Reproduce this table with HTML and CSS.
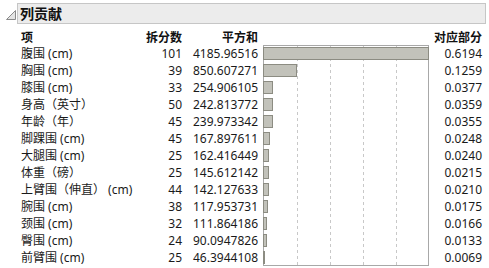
FILE: index.html
```html
<!DOCTYPE html>
<html lang="zh">
<head>
<meta charset="utf-8">
<link rel="stylesheet" href="styles.css">
</head>
<body>
<div class="panel">
  <div class="head">
    <span class="tri"><svg width="10" height="10" viewBox="0 0 10 10"><polygon points="0.5,9.5 9.5,9.5 9.5,0.5" fill="#e4e4e4" stroke="#8a8a8a" stroke-width="1"/></svg></span>
    <div class="title">列贡献</div>
  </div>
  <div class="tbl">
    <div class="th l">项</div>
    <div class="th r">拆分数</div>
    <div class="th r">平方和</div>
    <div class="th"></div>
    <div class="th r">对应部分</div>

    <div class="chart">
      <div class="brow"><div class="bar" style="width:166px"></div></div>
      <div class="brow"><div class="bar" style="width:33.7px"></div></div>
      <div class="brow"><div class="bar" style="width:10.1px"></div></div>
      <div class="brow"><div class="bar" style="width:9.6px"></div></div>
      <div class="brow"><div class="bar" style="width:9.5px"></div></div>
      <div class="brow"><div class="bar" style="width:6.6px"></div></div>
      <div class="brow"><div class="bar" style="width:6.4px"></div></div>
      <div class="brow"><div class="bar" style="width:5.8px"></div></div>
      <div class="brow"><div class="bar" style="width:5.6px"></div></div>
      <div class="brow"><div class="bar" style="width:4.7px"></div></div>
      <div class="brow"><div class="bar" style="width:4.4px"></div></div>
      <div class="brow"><div class="bar" style="width:3.6px"></div></div>
      <div class="brow"><div class="bar" style="width:1.8px"></div></div>
    </div>

    <div class="td l">腹围 (cm)</div><div class="td r">101</div><div class="td r">4185.96516</div><div class="td r c5">0.6194</div>
    <div class="td l">胸围 (cm)</div><div class="td r">39</div><div class="td r">850.607271</div><div class="td r c5">0.1259</div>
    <div class="td l">膝围 (cm)</div><div class="td r">33</div><div class="td r">254.906105</div><div class="td r c5">0.0377</div>
    <div class="td l">身高（英寸）</div><div class="td r">50</div><div class="td r">242.813772</div><div class="td r c5">0.0359</div>
    <div class="td l">年龄（年）</div><div class="td r">45</div><div class="td r">239.973342</div><div class="td r c5">0.0355</div>
    <div class="td l">脚踝围 (cm)</div><div class="td r">45</div><div class="td r">167.897611</div><div class="td r c5">0.0248</div>
    <div class="td l">大腿围 (cm)</div><div class="td r">25</div><div class="td r">162.416449</div><div class="td r c5">0.0240</div>
    <div class="td l">体重（磅）</div><div class="td r">25</div><div class="td r">145.612142</div><div class="td r c5">0.0215</div>
    <div class="td l">上臂围（伸直） (cm)</div><div class="td r">44</div><div class="td r">142.127633</div><div class="td r c5">0.0210</div>
    <div class="td l">腕围 (cm)</div><div class="td r">38</div><div class="td r">117.953731</div><div class="td r c5">0.0175</div>
    <div class="td l">颈围 (cm)</div><div class="td r">32</div><div class="td r">111.864186</div><div class="td r c5">0.0166</div>
    <div class="td l">臀围 (cm)</div><div class="td r">24</div><div class="td r">90.0947826</div><div class="td r c5">0.0133</div>
    <div class="td l">前臂围 (cm)</div><div class="td r">25</div><div class="td r">46.3944108</div><div class="td r c5">0.0069</div>
  </div>
</div>
</body>
</html>
```

FILE: styles.css
```css
html, body {
  margin: 0;
  padding: 0;
  background: #ffffff;
}
body {
  font-family: "Noto Sans", "Noto Sans CJK SC", sans-serif;
  font-size: 12px;
  color: #1a1a1a;
  width: 489px;
  height: 268px;
  overflow: hidden;
}
.panel {
  padding-top: 3px;
}
.head {
  display: flex;
  align-items: flex-start;
}
.tri {
  width: 17px;
  height: 21px;
  display: flex;
  align-items: flex-start;
  justify-content: flex-start;
  padding-left: 6px;
  padding-top: 7px;
  box-sizing: border-box;
}
.tri svg {
  display: block;
}
.title {
  width: 469px;
  height: 21px;
  box-sizing: border-box;
  border: 1px solid #c6c6c6;
  background: #ececec;
  font-family: "Noto Sans CJK SC", sans-serif;
  font-weight: bold;
  font-size: 14px;
  line-height: 19px;
  padding-left: 2px;
  color: #111;
}
.tbl {
  margin-top: 5px;
  margin-left: 21px;
  display: grid;
  grid-template-columns: 120px 41px 76px 171px 53px;
  grid-template-rows: 16px repeat(13, 17px);
}
.th {
  font-family: "Noto Sans CJK SC", sans-serif;
  font-weight: bold;
  line-height: 16px;
  white-space: nowrap;
  color: #111;
}
.td {
  line-height: 17px;
  white-space: nowrap;
}
.l { text-align: left; }
.r { text-align: right; }
.c5 { grid-column: 5; }
.chart {
  grid-column: 4;
  grid-row: 2 / span 13;
  margin-left: 5px;
  width: 166px;
  height: 221px;
  box-sizing: border-box;
  border: 1px solid #a8a8a8;
  display: flex;
  flex-direction: column;
  background-image:
    repeating-linear-gradient(to bottom, #c8c8c8 0 3px, transparent 3px 6px),
    repeating-linear-gradient(to bottom, #c8c8c8 0 3px, transparent 3px 6px),
    repeating-linear-gradient(to bottom, #c8c8c8 0 3px, transparent 3px 6px),
    repeating-linear-gradient(to bottom, #c8c8c8 0 3px, transparent 3px 6px);
  background-size: 1px 100%;
  background-repeat: no-repeat;
  background-position: 33px 0, 66px 0, 99px 0, 132px 0;
}
.brow {
  height: 17px;
  flex: none;
  padding-top: 1px;
  box-sizing: border-box;
  margin-left: -1px;
}
.bar {
  height: 13px;
  box-sizing: border-box;
  border: 1px solid #8c8c82;
  background: #c2c2ba;
}
```
